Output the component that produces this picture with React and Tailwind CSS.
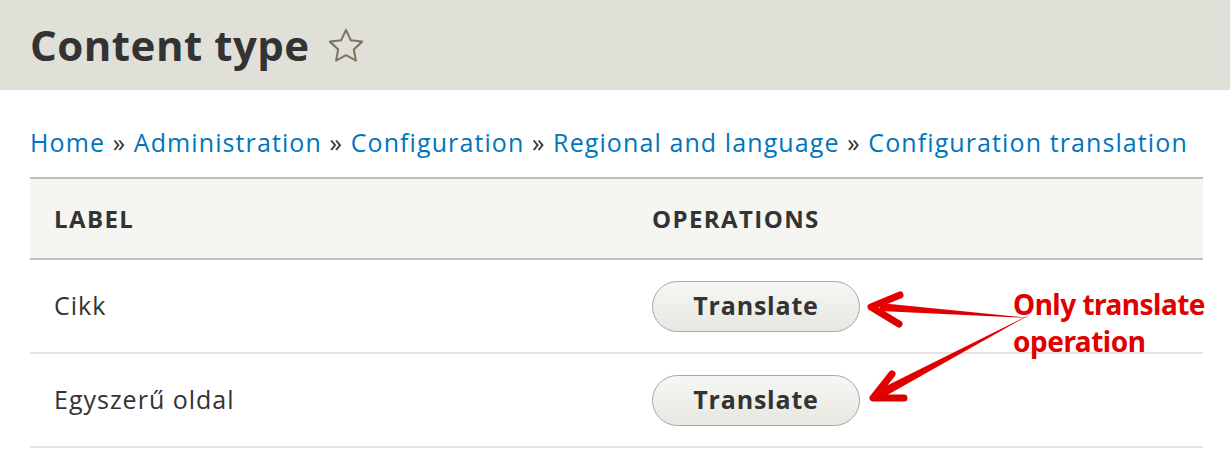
import React from "react";

const rows = ["Cikk", "Egyszerű oldal"];

function Star() {
  return (
    <svg width="42" height="42" viewBox="0 0 24 24" className="ml-[15px] mt-[2px]">
      <path
        d="M12 2.8l2.75 5.9 6.45.8-4.75 4.45 1.2 6.4L12 17.2l-5.65 3.15 1.2-6.4L2.8 9.5l6.45-.8z"
        fill="none"
        stroke="#7b7862"
        strokeWidth="1.2"
        strokeLinejoin="round"
      />
    </svg>
  );
}

function Arrows() {
  // red hand-drawn annotation arrows
  return (
    <svg
      className="absolute left-0 top-0 pointer-events-none"
      width="1230"
      height="462"
      viewBox="0 0 1230 462"
    >
      <defs>
        <linearGradient id="red" x1="0" y1="0" x2="1" y2="1">
          <stop offset="0" stopColor="#ee0000" />
          <stop offset="1" stopColor="#d40000" />
        </linearGradient>
      </defs>
      {/* top arrow */}
      <path d="M1030 318 L880 303 L880 311 Z" fill="url(#red)" />
      <path
        d="M900 295 L871 307 L899 324"
        fill="none"
        stroke="url(#red)"
        strokeWidth="7"
        strokeLinecap="round"
        strokeLinejoin="round"
      />
      {/* bottom arrow */}
      <path d="M1031 314 L876 391 L882 398 Z" fill="url(#red)" />
      <path
        d="M892 374 L873 398 L904 398"
        fill="none"
        stroke="url(#red)"
        strokeWidth="7"
        strokeLinecap="round"
        strokeLinejoin="round"
      />
    </svg>
  );
}

export default function App() {
  return (
    <div
      className="relative w-[1230px] h-[462px] bg-white overflow-hidden text-[#333]"
      style={{ fontFamily: '"Open Sans", "DejaVu Sans", sans-serif' }}
    >
      {/* HEADER */}
      <div className="h-[90px] bg-[#e0e0d8] flex items-center pl-[30px]">
        <h1 className="text-[42px] font-bold tracking-[0.5px] leading-none text-[#333]">
          Content type
        </h1>
        <Star />
      </div>

      <div className="pl-[30px] pr-[27px]">
        {/* BREADCRUMB */}
        <div className="h-[87px] pt-[34px] text-[25px] tracking-[1.1px] leading-[36px] text-[#0074bd] whitespace-nowrap">
          <a>Home</a> <span className="text-[#333]">»</span> <a>Administration</a>{" "}
          <span className="text-[#333]">»</span> <a>Configuration</a>{" "}
          <span className="text-[#333]">»</span> <a>Regional and language</a>{" "}
          <span className="text-[#333]">»</span> <a>Configuration translation</a>
        </div>

        {/* TABLE */}
        <div className="border-t-2 border-[#bfbfba]">
          <div className="grid grid-cols-[622px_1fr] h-[81px] bg-[#f5f5f2] border-b-2 border-[#bfbfba] items-center text-[24px] tracking-[1.4px] font-bold uppercase">
            <div className="pl-[24px]">Label</div>
            <div>Operations</div>
          </div>
          {rows.map((r) => (
            <div
              key={r}
              className="grid grid-cols-[622px_1fr] h-[94px] border-b-2 border-[#e6e4df] items-center text-[25px] tracking-[1px]"
            >
              <div className="pl-[24px]">{r}</div>
              <div>
                <button className="w-[208px] h-[51px] rounded-full border-[1.5px] border-[#a6a6a6] bg-gradient-to-b from-[#f6f6f3] to-[#e8e8e2] text-[25px] tracking-[0.8px] font-bold text-[#333]">
                  Translate
                </button>
              </div>
            </div>
          ))}
        </div>
      </div>

      {/* ANNOTATION */}
      <Arrows />
      <div
        className="absolute left-[1013px] top-[286px] text-[28px] font-bold leading-[37px] text-[#e00000] tracking-[-0.5px] whitespace-nowrap"
        style={{ fontFamily: '"Noto Sans", sans-serif' }}
      >
        Only translate
        <br />
        operation
      </div>
    </div>
  );
}
